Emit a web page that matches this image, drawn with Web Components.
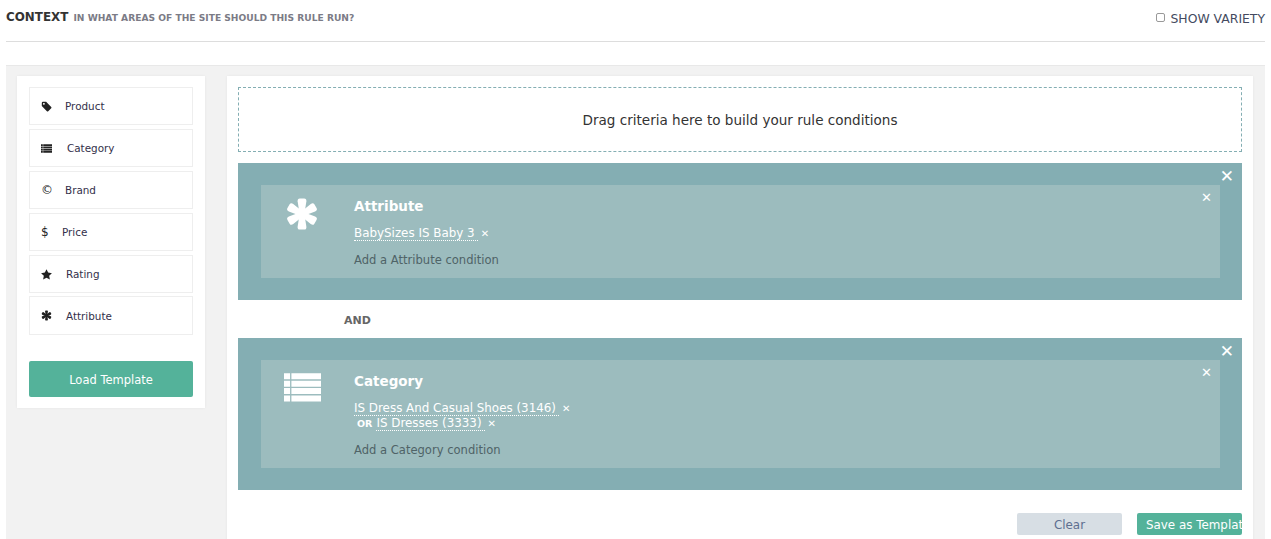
<!DOCTYPE html>
<html>
<head>
<meta charset="utf-8">
<style>
  html, body { margin: 0; height: 539px; overflow: hidden; background: #fff; font-family: "DejaVu Sans", sans-serif; }
</style>
</head>
<body>
<rule-page></rule-page>
<script>
const lobes = [0, 60, 120, 180, 240, 300].map(a => `<path transform="rotate(${a} 7 7)" d="M6 7 L5.2 1.8 Q5.1 .6 6.1 .6 H7.9 Q8.9 .6 8.8 1.8 L8 7 Z"/>`).join('');
const rows = [1.6, 4.4, 7.2, 10].map(y => `<path d="M0 ${y}h2.3v2.3H0zM2.8 ${y}H14v2.3H2.8z"/>`).join('');
const ICONS = {
  tag: '<path d="M1 2.5 A1.5 1.5 0 0 1 2.5 1 H6.5 L13 7.5 A1.2 1.2 0 0 1 13 9.2 L9.2 13 A1.2 1.2 0 0 1 7.5 13 L1 6.5 Z M3.7 2.6 A1.1 1.1 0 1 0 3.71 2.6 Z" fill-rule="evenodd"/>',
  list: rows,
  star: '<path d="M7 .4l2.1 4.2 4.8.7-3.5 3.3.9 4.7L7 11.1l-4.3 2.2.9-4.7L.1 5.3l4.8-.7z"/>',
  asterisk: lobes
};

class ContextHeader extends HTMLElement {
  constructor() {
    super();
    this.attachShadow({ mode: 'open' }).innerHTML = `
      <style>
        :host { display: flex; justify-content: space-between; height: 41px; margin: 0 6px; border-bottom: 1px solid #ddd; }
        .title { padding-top: 10px; font-size: 11.9px; line-height: 15px; font-weight: bold; color: #333; }
        .title small { font-size: 9.15px; color: #7b7b86; margin-left: 1px; }
        label { display: flex; gap: 5px; padding-top: 11px; height: 14px; font-size: 12.4px; line-height: 15px; color: #444a60; white-space: nowrap; }
        i { display: block; width: 7px; height: 7px; margin-top: 2px; border: 1px solid #999; border-radius: 2px; background: #fff; }
      </style>
      <div class="title">CONTEXT <small>IN WHAT AREAS OF THE SITE SHOULD THIS RULE RUN?</small></div>
      <label><i></i>SHOW VARIETY</label>`;
  }
}

class CriteriaItem extends HTMLElement {
  constructor() {
    super();
    const gap = this.getAttribute('gap');
    const icon = this.getAttribute('icon');
    const glyph = this.getAttribute('glyph');
    this.attachShadow({ mode: 'open' }).innerHTML = `
      <style>
        :host { display: flex; align-items: center; box-sizing: border-box; height: 38px; padding-left: 11px; border: 1px solid #eee; font-size: 10.4px; color: #33304a; }
        .ic { width: 11px; flex: none; display: flex; justify-content: flex-start; font-size: 12px; color: #222; }
        svg { width: 11px; height: 11px; fill: #222; display: block; flex: none; }
        .t { margin-left: ${gap}px; }
      </style>
      <span class="ic">${icon ? `<svg viewBox="0 0 14 14">${ICONS[icon]}</svg>` : glyph}</span>
      <span class="t"><slot></slot></span>`;
  }
}

class CriteriaSidebar extends HTMLElement {
  constructor() {
    super();
    this.attachShadow({ mode: 'open' }).innerHTML = `
      <style>
        :host { display: block; width: 188px; height: 332px; box-sizing: border-box; padding: 11px 12px; background: #fff; box-shadow: 0 0 2px #e4e4e4; }
        .items { display: grid; grid-template-rows: repeat(5, 38px) 39px; row-gap: 4px; }
        ::slotted(criteria-item:last-child) { height: 39px; margin-top: -1px; }
        button { display: block; width: 100%; height: 36px; margin-top: 25px; padding: 2px 0 0; border: 0; border-radius: 2px; background: #54b29a; color: #fff; font: 11.5px "DejaVu Sans", sans-serif; }
      </style>
      <div class="items"><slot></slot></div>
      <button>Load Template</button>`;
  }
}

class RuleBlock extends HTMLElement {
  constructor() {
    super();
    const icon = this.getAttribute('icon');
    const isList = icon === 'list';
    this.attachShadow({ mode: 'open' }).innerHTML = `
      <style>
        :host { display: block; position: relative; padding: 22px 22px 22px 23px; background: #84aeb3; }
        .inner { position: relative; display: flex; background: #9cbcbe; padding: 12px 0 10px; color: #fff; }
        .ic { width: 82px; margin-right: 11px; flex: none; display: flex; justify-content: center; }
        svg { width: ${isList ? 37 : 34}px; height: ${isList ? 37 : 34}px; fill: #fff; margin-top: ${isList ? -3 : 0}px; }
        h3 { margin: 0 0 11px; font-size: 13.5px; line-height: 18px; font-weight: bold; }
        .add { margin-top: 12px; font-size: 11.55px; line-height: 15px; color: #4f6367; }
        .x { position: absolute; color: #fff; line-height: 1; }
        .outer-x { top: 5px; right: 8px; font-size: 17px; }
        .inner-x { top: 6px; right: 8px; font-size: 13px; }
      </style>
      <span class="x outer-x">✕</span>
      <div class="inner">
        <span class="x inner-x">✕</span>
        <div class="ic"><svg viewBox="0 0 14 14">${ICONS[icon]}</svg></div>
        <div>
          <h3>${this.getAttribute('name')}</h3>
          <slot></slot>
          <div class="add">Add a ${this.getAttribute('name')} condition</div>
        </div>
      </div>`;
  }
}

class RuleCondition extends HTMLElement {
  constructor() {
    super();
    const or = this.hasAttribute('or');
    this.attachShadow({ mode: 'open' }).innerHTML = `
      <style>
        :host { display: block; font-size: 11.9px; line-height: 15px; color: #fff; white-space: nowrap; }
        .or { font-size: 9.5px; font-weight: bold; margin: 0 4px 0 3px; }
        u { text-decoration: none; border-bottom: 1px dotted #fff; padding-right: 3px; }
        b { font-weight: normal; font-size: 10px; margin-left: 3px; }
      </style>
      ${or ? '<span class="or">OR</span>' : ''}<u><slot></slot></u><b>✕</b>`;
  }
}

class ActionButton extends HTMLElement {
  constructor() {
    super();
    this.attachShadow({ mode: 'open' }).innerHTML = `
      <style>
        :host { display: block; width: 105px; height: 22px; overflow: hidden; border-radius: 2px; font-size: 11.9px; line-height: 25px; white-space: nowrap; }
        :host([kind=clear]) { background: #d7dee4; color: #5e6f90; text-align: center; }
        :host([kind=save]) { background: #54b29a; color: #fff; padding-left: 9px; box-sizing: border-box; }
      </style>
      <slot></slot>`;
  }
}

class RulePage extends HTMLElement {
  constructor() {
    super();
    this.attachShadow({ mode: 'open' }).innerHTML = `
      <style>
        :host { display: block; }
        .band { display: flex; align-items: flex-start; gap: 22px; margin: 23px 6px 0; padding: 10px 12px 0 11px; height: 464px; background: #f2f2f2; border-top: 1px solid #e8e8e8; }
        .main { flex: 1; height: 470px; box-sizing: border-box; padding: 11px 11px 0; background: #fff; box-shadow: 0 0 2px #e4e4e4; }
        .drop { height: 65px; box-sizing: border-box; display: flex; align-items: center; justify-content: center; border: 1px dashed #84aeb3; margin-bottom: 11px; font-size: 13.55px; color: #333; }
        .and { height: 38px; box-sizing: border-box; padding: 13px 0 0 106px; font-size: 11px; line-height: 15px; font-weight: bold; color: #666; }
        .actions { display: flex; justify-content: flex-end; gap: 15px; margin-top: 23px; }
      </style>
      <context-header></context-header>
      <div class="band">
        <criteria-sidebar>
          <criteria-item icon="tag" gap="13">Product</criteria-item>
          <criteria-item icon="list" gap="15">Category</criteria-item>
          <criteria-item glyph="©" gap="13">Brand</criteria-item>
          <criteria-item glyph="$" gap="10">Price</criteria-item>
          <criteria-item icon="star" gap="14">Rating</criteria-item>
          <criteria-item icon="asterisk" gap="14">Attribute</criteria-item>
        </criteria-sidebar>
        <div class="main">
          <div class="drop">Drag criteria here to build your rule conditions</div>
          <rule-block icon="asterisk" name="Attribute">
            <rule-condition>BabySizes IS Baby 3</rule-condition>
          </rule-block>
          <div class="and">AND</div>
          <rule-block icon="list" name="Category">
            <rule-condition>IS Dress And Casual Shoes (3146)</rule-condition>
            <rule-condition or>IS Dresses (3333)</rule-condition>
          </rule-block>
          <div class="actions">
            <action-button kind="clear">Clear</action-button>
            <action-button kind="save">Save as Template</action-button>
          </div>
        </div>
      </div>`;
  }
}

customElements.define('context-header', ContextHeader);
customElements.define('criteria-item', CriteriaItem);
customElements.define('criteria-sidebar', CriteriaSidebar);
customElements.define('rule-block', RuleBlock);
customElements.define('rule-condition', RuleCondition);
customElements.define('action-button', ActionButton);
customElements.define('rule-page', RulePage);
</script>
</body>
</html>
